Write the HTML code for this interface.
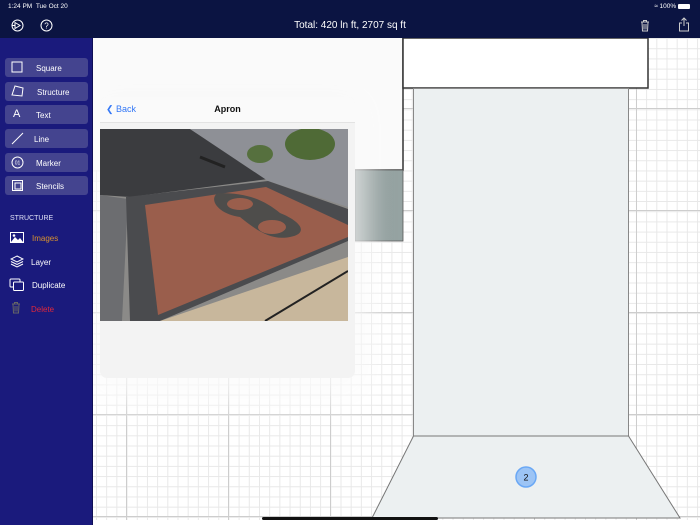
<!DOCTYPE html>
<html><head><meta charset="utf-8"><style>
*{margin:0;padding:0;box-sizing:border-box}
body{width:700px;height:525px;overflow:hidden;position:relative;background:#fff;font-family:"Liberation Sans",sans-serif}
.top{position:absolute;left:0;top:0;width:700px;height:38px;background:#0b1442;color:#fff;z-index:5}
.side{position:absolute;left:0;top:38px;width:93px;height:487px;background:#1a1a7c;border-right:1px solid #0f0f55;z-index:5}
.grid{position:absolute;left:93px;top:38px;width:607px;height:482px;background-color:#fff;
background-image:
linear-gradient(90deg,#cdcdcd 1px,transparent 1px),
linear-gradient(0deg,#cdcdcd 1px,transparent 1px),
linear-gradient(90deg,#e8e8e8 1px,transparent 1px),
linear-gradient(0deg,#e8e8e8 1px,transparent 1px);
background-size:102px 102px,102px 102px,10.2px 10.2px,10.2px 10.2px;
background-position:33px 71px,33px 71px,3px 1px,3px 1px}
.btn{position:absolute;left:5px;width:83px;height:19px;background:#44448f;border-radius:3px;color:#fff;font-size:8px}
.btn span{position:absolute;top:5.5px}
.btn svg{position:absolute;left:6px;top:3px}
.si{position:absolute;font-size:8px}
</style></head><body>
<div class="top">
<div style="position:absolute;left:8px;top:3px;font-size:6.5px">1:24 PM&nbsp;&nbsp;Tue Oct 20</div>
<div style="position:absolute;right:10px;top:3px;font-size:6.5px">&#8776; 100% <span style="display:inline-block;width:12px;height:5px;background:#fff;border-radius:1px;vertical-align:middle"></span></div>
<svg style="position:absolute;left:11px;top:19px" width="13" height="13" viewBox="0 0 13 13" fill="none" stroke="#fff" stroke-width="1"><circle cx="6.5" cy="6.5" r="5.5"/><path d="M4 3.5 L9 6.5 L4 9.5 Z M1 6.5H4"/></svg>
<svg style="position:absolute;left:40px;top:19px" width="13" height="13" viewBox="0 0 13 13" fill="none" stroke="#fff" stroke-width="1"><circle cx="6.5" cy="6.5" r="5.5"/><text x="6.5" y="9.3" font-size="8" fill="#fff" stroke="none" text-anchor="middle" font-family="Liberation Sans">?</text></svg>
<div style="position:absolute;left:0;width:700px;top:20px;text-align:center;font-size:10px">Total: 420 ln ft, 2707 sq ft</div>
<svg style="position:absolute;left:640px;top:19px" width="10" height="13" viewBox="0 0 10 13" fill="none" stroke="#ccc" stroke-width="1"><path d="M1 3H9M3.5 3V1.5H6.5V3M2 3.5L2.5 12H7.5L8 3.5M4 5V10.5M6 5V10.5"/></svg>
<svg style="position:absolute;left:678px;top:17px" width="12" height="15" viewBox="0 0 12 15" fill="none" stroke="#ccc" stroke-width="1"><path d="M6 1V9M3.5 3.5L6 1L8.5 3.5M4 6H1.5V14H10.5V6H8"/></svg>
</div>
<div class="side">
<div class="btn" style="top:20px"><svg width="12" height="12"><rect x="1" y="1" width="10" height="10" fill="none" stroke="#fff"/></svg><span style="left:31px">Square</span></div>
<div class="btn" style="top:44px"><svg width="14" height="13"><path d="M4 1L12 3L11 11L1 10Z" fill="none" stroke="#fff"/></svg><span style="left:32px">Structure</span></div>
<div class="btn" style="top:67px"><span style="left:8px;top:3px;font-size:11px">A</span><span style="left:31px">Text</span></div>
<div class="btn" style="top:91px"><svg width="13" height="13"><path d="M1 12L12 1" stroke="#fff"/></svg><span style="left:29px">Line</span></div>
<div class="btn" style="top:115px"><svg width="13" height="13"><circle cx="6.5" cy="6.5" r="5.5" fill="none" stroke="#fff"/><text x="6.5" y="8.5" font-size="5" fill="#fff" text-anchor="middle">01</text></svg><span style="left:31px">Marker</span></div>
<div class="btn" style="top:138px"><svg width="13" height="13"><rect x="1.5" y="1.5" width="10" height="10" fill="none" stroke="#fff"/><rect x="4" y="4" width="6" height="6" fill="none" stroke="#fff"/></svg><span style="left:31px">Stencils</span></div>
<div class="si" style="left:10px;top:177px;color:#dfe0f5;font-size:7px">STRUCTURE</div>
<svg style="position:absolute;left:10px;top:194px" width="14" height="11"><rect x="0.5" y="0.5" width="13" height="10" fill="none" stroke="#fff"/><path d="M1 10L5 5L8 8L10 6L13 10Z" fill="#fff"/><circle cx="4" cy="3.5" r="1.3" fill="#fff"/></svg>
<div class="si" style="left:32px;top:196px;color:#d9922e">Images</div>
<svg style="position:absolute;left:10px;top:217px" width="14" height="13" fill="none" stroke="#fff"><path d="M7 1L13 4L7 7L1 4Z M1 6.5L7 9.5L13 6.5 M1 9L7 12L13 9"/></svg>
<div class="si" style="left:31px;top:220px;color:#fff">Layer</div>
<svg style="position:absolute;left:9px;top:240px" width="16" height="14" fill="none" stroke="#fff"><rect x="1" y="1" width="10" height="8" rx="1"/><rect x="4.5" y="4" width="10" height="8.5" rx="1" fill="#1a1a7c"/></svg>
<div class="si" style="left:32px;top:243px;color:#fff">Duplicate</div>
<svg style="position:absolute;left:11px;top:263px" width="10" height="13" fill="none" stroke="#666"><path d="M1 3H9M3.5 3V1.5H6.5V3M2 3.5L2.5 12H7.5L8 3.5M4 5V10.5M6 5V10.5"/></svg>
<div class="si" style="left:31px;top:267px;color:#e0283c">Delete</div>
</div>
<div class="grid"></div>
<svg style="position:absolute;left:0;top:0" width="700" height="525">
<rect x="93" y="38" width="310" height="132" fill="#fafafa"/>
<path d="M403 38V170H355" fill="none" stroke="#333" stroke-width="1.5"/>
<defs><linearGradient id="g" x1="0" x2="1"><stop offset="0" stop-color="#7d8b8a"/><stop offset="1" stop-color="#96a4a3"/></linearGradient></defs>
<rect x="355" y="170" width="48" height="71" fill="url(#g)" stroke="#555" stroke-width="0.8"/>
<rect x="403" y="38" width="245" height="50" fill="#fff" stroke="#333" stroke-width="1.5"/>
<rect x="413.5" y="88.5" width="215" height="347.5" fill="#ecf0f1" stroke="#888" stroke-width="1"/>
<path d="M413.5 436L628.5 436L680 518L372 518Z" fill="#ecf0f1" stroke="#777" stroke-width="1"/>
<circle cx="526" cy="477" r="10" fill="#9cc4f5" stroke="#6aa8f5" stroke-width="1.5"/>
<text x="526" y="480.5" font-size="9" text-anchor="middle" fill="#111" font-family="Liberation Sans">2</text>
<rect x="262" y="517" width="176" height="3" rx="1.5" fill="#111"/>
</svg>
<div style="position:absolute;left:100px;top:97px;width:255px;height:281px;background:#f3f3f3;border-radius:7px;box-shadow:0 10px 30px 15px rgba(255,255,255,0.75),0 6px 30px rgba(0,0,0,0.08);overflow:hidden">
<div style="height:26px;background:#fafafa;border-bottom:1px solid #e3e3e3;position:relative">
<div style="position:absolute;left:6px;top:7px;color:#3478f6;font-size:9px">&#10094; Back</div>
<div style="position:absolute;left:0;width:255px;top:7px;text-align:center;font-size:9px;font-weight:bold;color:#111">Apron</div>
</div>
<svg style="position:absolute;left:0;top:32px" width="248" height="192" viewBox="0 0 248 192">
<rect width="248" height="192" fill="#8b8a88"/>
<path d="M0 0H90L168 50L30 68L0 66Z" fill="#3b3c3f"/>
<path d="M90 0H248V78L168 52Z" fill="#8e9096"/>
<ellipse cx="210" cy="15" rx="25" ry="16" fill="#4f6a36"/>
<ellipse cx="160" cy="25" rx="13" ry="9" fill="#56703e"/>
<path d="M0 66L28 70L22 192H0Z" fill="#6c6d70"/>
<path d="M26 68L168 52L248 80V112L60 192H30Z" fill="#4a4b4e"/>
<path d="M45 76L166 58L248 96V108L58 186Z" fill="#9a5e4c"/>
<path d="M118 64C108 70 118 85 140 88C155 100 170 112 190 108C210 104 200 92 180 84C165 72 150 64 118 64Z" fill="#4e4d4b"/>
<ellipse cx="140" cy="75" rx="13" ry="6" fill="#9a5e4c"/>
<ellipse cx="172" cy="98" rx="14" ry="7" fill="#9a5e4c"/>
<path d="M60 192L248 128V192Z" fill="#c8b79c"/>
<path d="M165 192L248 142" stroke="#222" stroke-width="2"/>
<path d="M100 28L125 38" stroke="#222" stroke-width="3"/>
</svg>
</div>
</body></html>
